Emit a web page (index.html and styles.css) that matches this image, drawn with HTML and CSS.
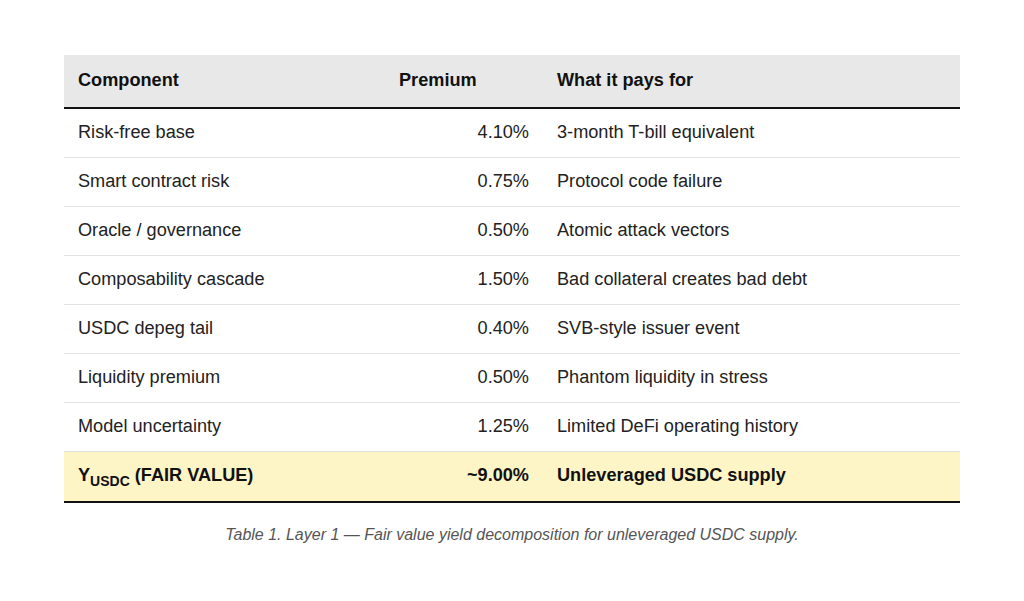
FILE: index.html
```
<!DOCTYPE html>
<html>
<head>
<meta charset="utf-8">
<link rel="stylesheet" href="styles.css">
</head>
<body>
<div class="wrap">
<table class="tbl">
<colgroup><col class="c1"><col class="c2"><col class="c3"></colgroup>
<thead>
<tr><th>Component</th><th>Premium</th><th>What it pays for</th></tr>
</thead>
<tbody>
<tr><td>Risk-free base</td><td class="num">4.10%</td><td>3-month T-bill equivalent</td></tr>
<tr><td>Smart contract risk</td><td class="num">0.75%</td><td>Protocol code failure</td></tr>
<tr><td>Oracle / governance</td><td class="num">0.50%</td><td>Atomic attack vectors</td></tr>
<tr><td>Composability cascade</td><td class="num">1.50%</td><td>Bad collateral creates bad debt</td></tr>
<tr><td>USDC depeg tail</td><td class="num">0.40%</td><td>SVB-style issuer event</td></tr>
<tr><td>Liquidity premium</td><td class="num">0.50%</td><td>Phantom liquidity in stress</td></tr>
<tr><td>Model uncertainty</td><td class="num">1.25%</td><td>Limited DeFi operating history</td></tr>
<tr class="total"><td>Y<sub>USDC</sub> (FAIR VALUE)</td><td class="num">~9.00%</td><td>Unleveraged USDC supply</td></tr>
</tbody>
</table>
<p class="caption">Table 1. Layer 1 — Fair value yield decomposition for unleveraged USDC supply.</p>
</div>
</body>
</html>
```
FILE: styles.css
```
html, body { margin: 0; padding: 0; background: #fff; }
body { font-family: "Liberation Sans", Arial, sans-serif; color: #222; }
.wrap { padding: 55px 64px 0; }
.tbl { width: 896px; border-collapse: collapse; table-layout: fixed; font-size: 18.15px; }
.c1 { width: 321px; }
.c2 { width: 158px; }
.c3 { width: 417px; }
.tbl th { background: #e8e8e8; text-align: left; font-weight: bold; padding: 15px 14px 17px; line-height: 20px; border-bottom: 2px solid #111; color: #111; }
.tbl td { padding: 13px 14px 15px; line-height: 20px; border-bottom: 1px solid #e2e2e2; }
.tbl td.num { text-align: right; }
.tbl tr.total td { background: #fef5c6; font-weight: bold; border-bottom: 2px solid #111; color: #111; padding: 13px 14px 16px; line-height: 20px; }
.tbl sub { font-size: 14px; line-height: 0; vertical-align: -5px; }
.caption { margin: 23px 0 0; text-align: center; font-style: italic; font-size: 16px; color: #555; }
```
